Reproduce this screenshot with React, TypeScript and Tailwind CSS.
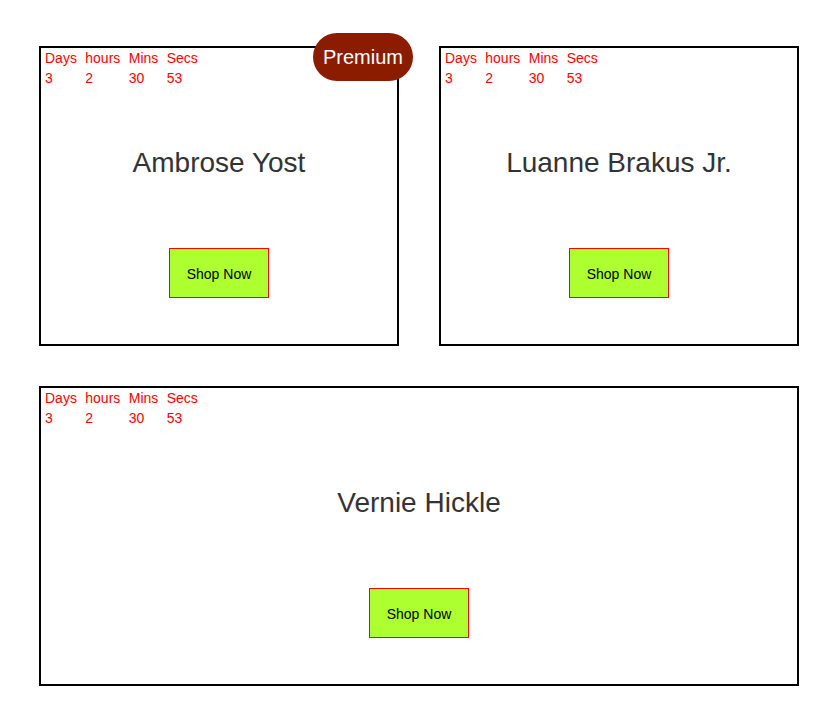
const DEALS = [
  { name: 'Ambrose Yost', premium: true, wide: false },
  { name: 'Luanne Brakus Jr.', premium: false, wide: false },
  { name: 'Vernie Hickle', premium: false, wide: true },
]

const TIMER = [
  { label: 'Days', value: '3' },
  { label: 'hours', value: '2' },
  { label: 'Mins', value: '30' },
  { label: 'Secs', value: '53' },
]

function Countdown() {
  return (
    <div className="flex px-[4px] text-[14px] leading-[20px] text-[#ff0000]">
      {TIMER.map((t) => (
        <div key={t.label} className="flex flex-col mr-[8.4px]">
          <span>{t.label}</span>
          <span>{t.value}</span>
        </div>
      ))}
    </div>
  )
}

function DealCard({ deal }: { deal: typeof DEALS[number] }) {
  return (
    <div
      className={
        'relative flex flex-col h-[300px] border-2 border-black ' +
        (deal.wide ? 'col-span-2' : '')
      }
    >
      {deal.premium && (
        <div className="absolute top-[-15px] right-[-16px] w-[100px] h-[48px] rounded-full bg-[#8b1c00] text-white text-[20px] flex items-center justify-center">
          Premium
        </div>
      )}
      <Countdown />
      <h2 className="mt-[59px] text-center text-[28px] leading-[32px] text-[#333333]">
        {deal.name}
      </h2>
      <div className="mt-[69px] flex justify-center">
        <button className="w-[100px] h-[50px] pt-[2px] bg-[#adff2f] border border-[#ff0000] text-[14px] text-black">
          Shop Now
        </button>
      </div>
    </div>
  )
}

export default function App() {
  return (
    <div
      className="min-h-screen bg-white pl-[39px] pt-[46px]"
      style={{ fontFamily: '"Liberation Sans", Arial, sans-serif' }}
    >
      <div className="grid grid-cols-[360px_360px] gap-[40px] w-[760px]">
        {DEALS.map((d) => (
          <DealCard key={d.name} deal={d} />
        ))}
      </div>
    </div>
  )
}
